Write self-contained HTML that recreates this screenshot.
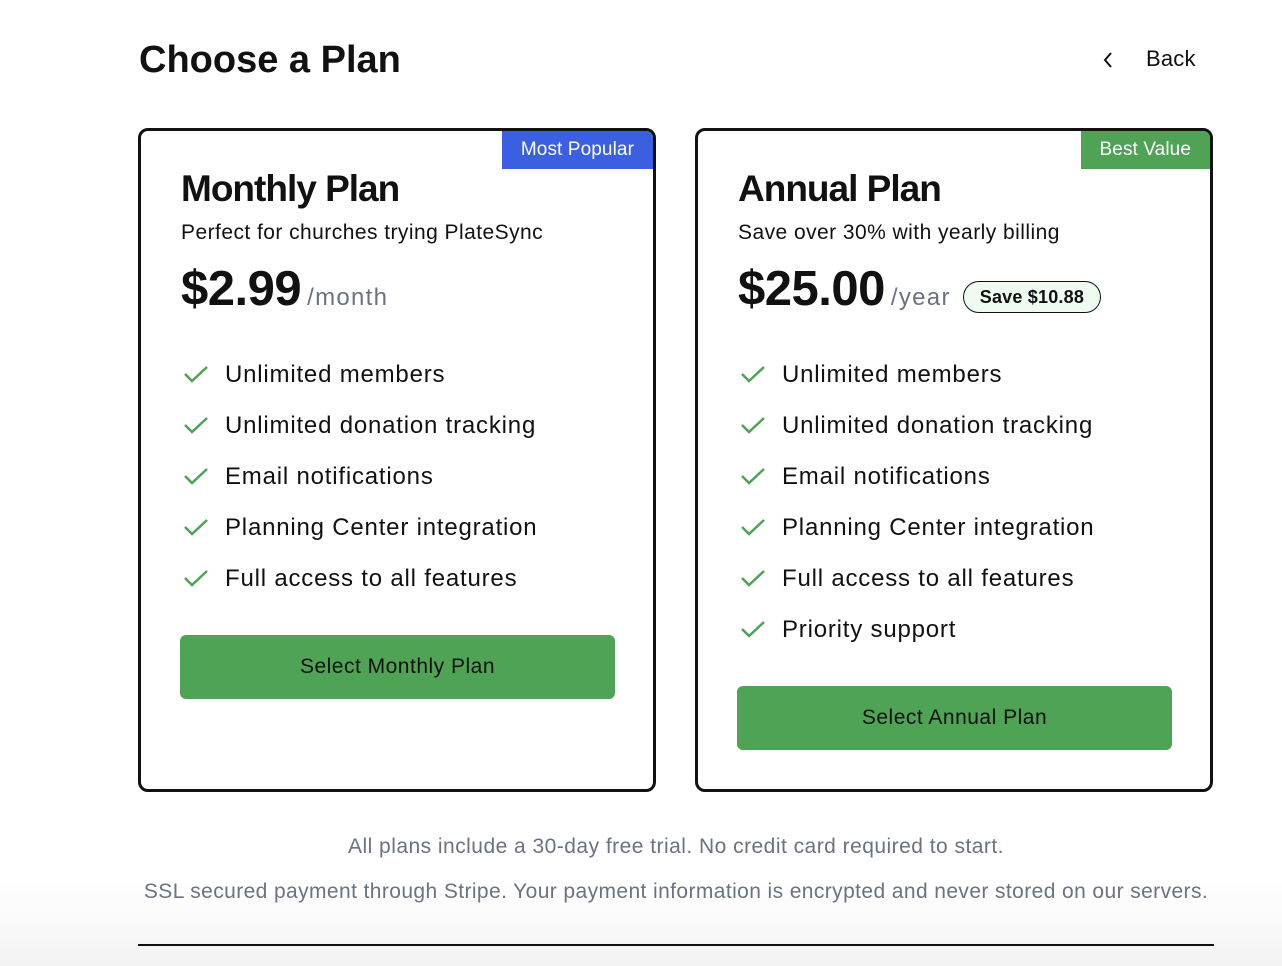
<!DOCTYPE html>
<html><head><meta charset="utf-8"><style>
*{margin:0;padding:0;box-sizing:border-box}
body{width:1282px;height:966px;position:relative;overflow:hidden;font-family:"Liberation Sans",sans-serif;color:#111;background:linear-gradient(#fff 0,#fff 880px,#f3f3f3 966px)}
.a{position:absolute;white-space:nowrap}
.card{position:absolute;top:128px;width:518px;height:664px;border:3px solid #111;border-radius:10px;background:#fff;overflow:hidden}
.badge{position:absolute;top:0;right:0;height:38px;color:#fff;font-size:19px;line-height:38px;padding:0 19px;letter-spacing:0.1px}
.t{position:absolute;left:40px;top:37px;font-size:37px;font-weight:bold;letter-spacing:-1.0px}
.s{position:absolute;left:40px;top:90px;font-size:21px;letter-spacing:0.45px}
.p{position:absolute;left:40px;top:130px;font-size:49px;font-weight:bold;letter-spacing:-0.5px}
.p span{font-size:24px;font-weight:normal;color:#6b7280;letter-spacing:1.3px;margin-left:6px}
.f{position:absolute;left:84px;font-size:24px;letter-spacing:0.8px;line-height:30px}
.f svg{position:absolute;left:-42px;top:4px}
.btn{position:absolute;left:39px;width:435px;height:64px;background:#4ea355;border-radius:6px;text-align:center;line-height:64px;font-size:21px;color:#111;letter-spacing:0.5px}
.ft{position:absolute;left:138px;width:1076px;text-align:center;font-size:21px;color:#6b7280;white-space:nowrap}
</style></head><body>
<div class="a" style="left:139px;top:39px;font-size:38px;font-weight:bold;letter-spacing:0px">Choose a Plan</div>
<svg class="a" style="left:1101px;top:51px" width="14" height="18" viewBox="0 0 14 18"><path d="M10 2 L4 9 L10 16" fill="none" stroke="#111" stroke-width="2"/></svg>
<div class="a" style="left:1146px;top:46px;font-size:22px;letter-spacing:0.2px">Back</div>

<div class="card" style="left:138px">
<div class="badge" style="background:#3a5fe0">Most Popular</div>
<div class="t">Monthly Plan</div>
<div class="s">Perfect for churches trying PlateSync</div>
<div class="p">$2.99<span>/month</span></div>
<div class="f" style="top:229px"><svg width="26" height="20"><path d="M2 10 L9 17 L24 3" fill="none" stroke="#4ea355" stroke-width="2.5"/></svg>Unlimited members</div>
<div class="f" style="top:280px"><svg width="26" height="20"><path d="M2 10 L9 17 L24 3" fill="none" stroke="#4ea355" stroke-width="2.5"/></svg>Unlimited donation tracking</div>
<div class="f" style="top:331px"><svg width="26" height="20"><path d="M2 10 L9 17 L24 3" fill="none" stroke="#4ea355" stroke-width="2.5"/></svg>Email notifications</div>
<div class="f" style="top:382px"><svg width="26" height="20"><path d="M2 10 L9 17 L24 3" fill="none" stroke="#4ea355" stroke-width="2.5"/></svg>Planning Center integration</div>
<div class="f" style="top:433px"><svg width="26" height="20"><path d="M2 10 L9 17 L24 3" fill="none" stroke="#4ea355" stroke-width="2.5"/></svg>Full access to all features</div>
<div class="btn" style="top:504px">Select Monthly Plan</div>
</div>

<div class="card" style="left:695px">
<div class="badge" style="background:#4ea355">Best Value</div>
<div class="t">Annual Plan</div>
<div class="s">Save over 30% with yearly billing</div>
<div class="p">$25.00<span>/year</span><span style="display:inline-block;vertical-align:2px;margin-left:12px;border:1.5px solid #111;border-radius:17px;background:#effaf1;color:#111;font-weight:bold;font-size:18px;line-height:30px;padding:0 16px;letter-spacing:0.2px">Save $10.88</span></div>
<div class="f" style="top:229px"><svg width="26" height="20"><path d="M2 10 L9 17 L24 3" fill="none" stroke="#4ea355" stroke-width="2.5"/></svg>Unlimited members</div>
<div class="f" style="top:280px"><svg width="26" height="20"><path d="M2 10 L9 17 L24 3" fill="none" stroke="#4ea355" stroke-width="2.5"/></svg>Unlimited donation tracking</div>
<div class="f" style="top:331px"><svg width="26" height="20"><path d="M2 10 L9 17 L24 3" fill="none" stroke="#4ea355" stroke-width="2.5"/></svg>Email notifications</div>
<div class="f" style="top:382px"><svg width="26" height="20"><path d="M2 10 L9 17 L24 3" fill="none" stroke="#4ea355" stroke-width="2.5"/></svg>Planning Center integration</div>
<div class="f" style="top:433px"><svg width="26" height="20"><path d="M2 10 L9 17 L24 3" fill="none" stroke="#4ea355" stroke-width="2.5"/></svg>Full access to all features</div>
<div class="f" style="top:484px"><svg width="26" height="20"><path d="M2 10 L9 17 L24 3" fill="none" stroke="#4ea355" stroke-width="2.5"/></svg>Priority support</div>
<div class="btn" style="top:555px">Select Annual Plan</div>
</div>

<div class="ft" style="top:835px;letter-spacing:0.47px">All plans include a 30-day free trial. No credit card required to start.</div>
<div class="ft" style="top:880px;letter-spacing:0.4px">SSL secured payment through Stripe. Your payment information is encrypted and never stored on our servers.</div>
<div class="a" style="left:138px;top:944px;width:1076px;height:1.5px;background:#111"></div>
</body></html>
